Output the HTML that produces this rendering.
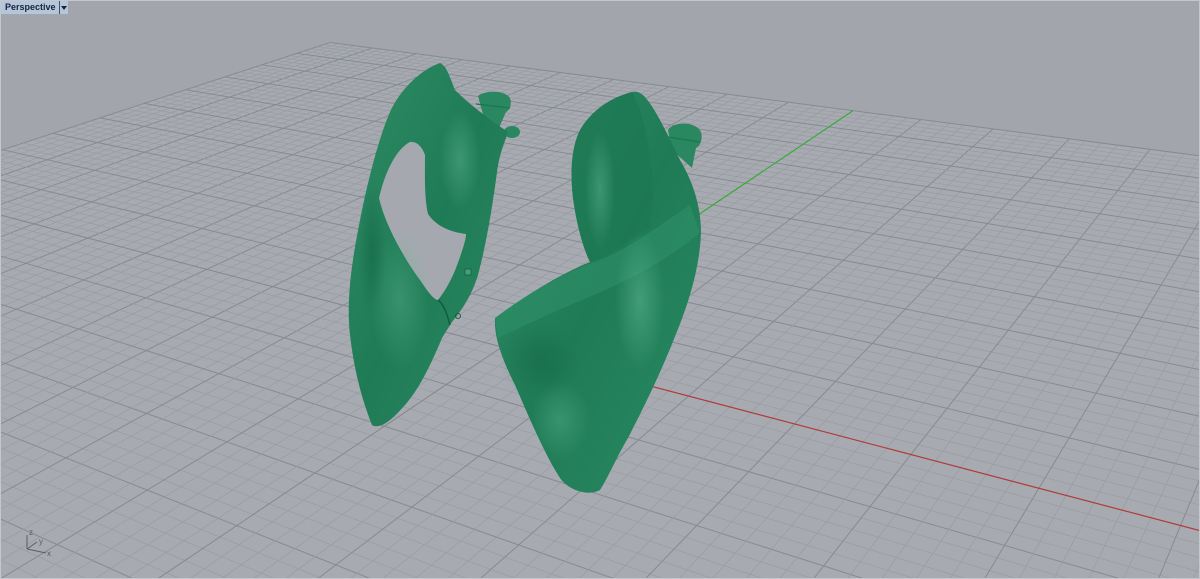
<!DOCTYPE html>
<html><head><meta charset="utf-8"><style>
html,body{margin:0;padding:0;overflow:hidden;}
body{width:1200px;height:579px;overflow:hidden;background:#a2a6ac;position:relative;font-family:"Liberation Sans",sans-serif;}
#v{position:absolute;left:0;top:0;display:block;}
.lbl{position:absolute;left:1px;top:1px;height:13px;width:54px;background:#b4c6dc;font-size:9px;font-weight:bold;color:#1a2233;line-height:13px;padding-left:4px;white-space:nowrap;overflow:hidden;}
.dd{position:absolute;left:59px;top:1px;width:8px;height:13px;background:#b4c6dc;border-left:1px solid #44505e;}
.dd:after{content:"";position:absolute;left:1px;top:5px;border-left:3px solid transparent;border-right:3px solid transparent;border-top:4px solid #1a2233;}
.frame{position:absolute;left:0;top:0;width:1198px;height:577px;border:1px solid #c4c8cd;}
</style></head><body>
<svg id="v" width="1200" height="579" viewBox="0 0 1200 579">
<defs>
<linearGradient id="gA" x1="0" y1="0" x2="1" y2="1">
<stop offset="0" stop-color="#2e8c64"/><stop offset="0.5" stop-color="#1f7b56"/><stop offset="1" stop-color="#2a8a62"/></linearGradient>
<radialGradient id="hl" cx="0.5" cy="0.5" r="0.5"><stop offset="0" stop-color="#5cb58e" stop-opacity="0.8"/><stop offset="1" stop-color="#5cb58e" stop-opacity="0"/></radialGradient>
<radialGradient id="dk" cx="0.5" cy="0.5" r="0.5"><stop offset="0" stop-color="#0c5a3c" stop-opacity="0.7"/><stop offset="1" stop-color="#0c5a3c" stop-opacity="0"/></radialGradient>
</defs>
<g id="grid"></g>
<!-- left object knobs -->
<path d="M478 96 C485 90 505 90 510 98 C512 104 510 110 506 112 L498 130 L484 118 Z" fill="#2a875f"/>
<path d="M476 104 L510 108" stroke="#157a4d" stroke-width="1.2"/>
<ellipse cx="512" cy="132" rx="8" ry="6" fill="#2a875f"/>
<!-- left object -->
<path d="M440 63 C420 70 400 90 390 112 C378 140 368 180 360 220 C352 260 346 300 350 335 C354 370 362 400 372 425 C380 430 392 420 405 405 C420 388 432 362 442 338 L452 322 C462 310 472 295 478 275 C486 245 492 210 497 172 C500 150 506 140 508 132 C490 120 470 105 455 90 C450 78 447 66 440 63 Z" fill="url(#gA)"/>
<!-- hole -->
<path d="M410 142 C398 148 386 168 379 198 C385 225 405 260 420 280 C428 292 434 300 438 300 C446 290 452 278 456 268 C462 252 466 240 466 234 C450 232 436 226 428 214 C424 198 425 170 425 155 C422 146 416 141 410 142 Z" fill="#a5a9af"/>
<ellipse cx="400" cy="300" rx="30" ry="70" fill="url(#hl)" opacity="0.5"/>
<ellipse cx="460" cy="160" rx="20" ry="50" fill="url(#hl)" opacity="0.6"/>
<ellipse cx="372" cy="250" rx="14" ry="70" fill="url(#dk)" opacity="0.6"/>
<path d="M438 300 C445 305 448 318 450 325" stroke="#0f5e3c" stroke-width="1.5" fill="none"/>
<circle cx="458" cy="316" r="2.5" fill="none" stroke="#145f3f"/>
<rect x="465" y="269" width="6" height="6" fill="#45a07a" stroke="#146040" stroke-width="0.8"/>
<!-- right object knob -->
<path d="M668 130 C672 122 695 120 701 132 C703 140 700 146 696 148 L692 168 L672 150 Z" fill="#2a875f"/>
<path d="M668 137 L700 142" stroke="#157a4d" stroke-width="1.2"/>
<!-- right object -->
<path d="M632 92 C610 98 592 110 580 130 C570 150 570 180 574 205 C578 230 584 250 590 262 C565 272 530 292 495 318 C494 335 500 355 515 385 C528 415 545 455 560 478 C570 492 590 496 600 490 C608 478 616 458 628 438 C645 405 662 370 676 334 C690 300 700 265 701 232 C701 205 692 180 680 160 C668 135 655 108 645 97 C640 92 636 91 632 92 Z" fill="url(#gA)"/>
<path d="M632 92 C610 98 592 110 580 130 C570 150 570 180 574 205 C578 230 584 250 590 262 C610 255 630 240 650 228 C655 190 652 150 640 110 Z" fill="#1c7652" opacity="0.7"/>
<path d="M495 318 C530 292 565 272 600 260 C630 248 660 225 690 205 L700 232 C670 260 620 285 570 305 C540 318 515 330 498 338 Z" fill="#2f9068" opacity="0.6"/>
<ellipse cx="640" cy="300" rx="25" ry="70" fill="url(#hl)" opacity="0.7"/>
<ellipse cx="560" cy="420" rx="30" ry="40" fill="url(#hl)" opacity="0.5"/>
<ellipse cx="600" cy="190" rx="15" ry="60" fill="url(#hl)" opacity="0.6"/>
<ellipse cx="540" cy="360" rx="40" ry="40" fill="url(#dk)" opacity="0.5"/>
<!-- axis icon -->
<g stroke="#5a5e64" stroke-width="1" fill="none">
<path d="M27 549 L27 535"/><path d="M27 549 L46 553"/><path d="M27 549 L37 542"/>
</g>
<g font-size="8" fill="#5a5e64" font-family="Liberation Sans,sans-serif">
<text x="29" y="535">z</text><text x="39" y="544">y</text><text x="47" y="556">x</text>
</g>
</svg>
<div class="frame"></div>
<div class="lbl">Perspective</div><div class="dd"></div>
<script>
(function(){
var a=-0.4034,b=0.5065;
function P(u,v){var d=a*u+b*v+1;return [(a*u*-1623+b*v*1546+502)/d,(a*u*-212+b*v*-356+347)/d];}
var g=document.getElementById("grid");
var s='';
var c=[P(-1,-1),P(-1,1),P(1,1),P(1,-1)];
s+='<polygon points="'+c.map(function(p){return p.join(",")}).join(" ")+'" fill="#a7abb1"/>';
var N=50;
for(var i=-N;i<=N;i++){
 var t=i/N,maj=(i%5==0);
 if(i==0)continue;
 var col=maj?"#868a91":"#989ca2",w=maj?1:0.7;
 var p1=P(t,-1),p2=P(t,1);
 s+='<line x1="'+p1[0]+'" y1="'+p1[1]+'" x2="'+p2[0]+'" y2="'+p2[1]+'" stroke="'+col+'" stroke-width="'+w+'"/>';
 p1=P(-1,t);p2=P(1,t);
 s+='<line x1="'+p1[0]+'" y1="'+p1[1]+'" x2="'+p2[0]+'" y2="'+p2[1]+'" stroke="'+col+'" stroke-width="'+w+'"/>';
}
var o=P(0,0),px=P(1,0),py=P(0,1),nx=P(-1,0),ny=P(0,-1);
s+='<line x1="'+nx[0]+'" y1="'+nx[1]+'" x2="'+o[0]+'" y2="'+o[1]+'" stroke="#83878e" stroke-width="1"/>';
s+='<line x1="'+ny[0]+'" y1="'+ny[1]+'" x2="'+o[0]+'" y2="'+o[1]+'" stroke="#83878e" stroke-width="1"/>';
s+='<line x1="'+o[0]+'" y1="'+o[1]+'" x2="'+px[0]+'" y2="'+px[1]+'" stroke="#b03a3a" stroke-width="1.2"/>';
s+='<line x1="'+o[0]+'" y1="'+o[1]+'" x2="'+py[0]+'" y2="'+py[1]+'" stroke="#3aa83a" stroke-width="1.2"/>';
g.innerHTML=s;
})();
</script>
</body></html>
